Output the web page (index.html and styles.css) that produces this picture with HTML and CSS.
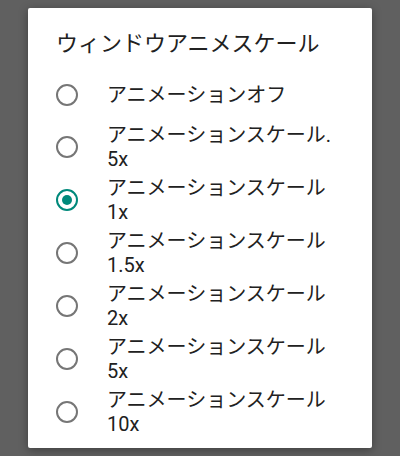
FILE: index.html
```html
<!DOCTYPE html>
<html lang="ja">
<head>
<meta charset="utf-8">
<link rel="stylesheet" href="styles.css">
</head>
<body>
<div class="dialog">
  <div class="title">ウィンドウアニメスケール</div>
  <div class="list">
    <div class="item first"><span class="radio"></span><span class="label">アニメーションオフ</span></div>
    <div class="item"><span class="radio"></span><span class="label">アニメーションスケール.<br>5x</span></div>
    <div class="item"><span class="radio checked"></span><span class="label">アニメーションスケール<br>1x</span></div>
    <div class="item"><span class="radio"></span><span class="label">アニメーションスケール<br>1.5x</span></div>
    <div class="item"><span class="radio"></span><span class="label">アニメーションスケール<br>2x</span></div>
    <div class="item"><span class="radio"></span><span class="label">アニメーションスケール<br>5x</span></div>
    <div class="item"><span class="radio"></span><span class="label">アニメーションスケール<br>10x</span></div>
  </div>
</div>
</body>
</html>
```
FILE: styles.css
```css
* { box-sizing: border-box; }
html, body { margin: 0; padding: 0; }
body {
  background: #606060;
  width: 400px;
  height: 456px;
  overflow: hidden;
  font-family: Roboto, "Noto Sans CJK JP", sans-serif;
  color: #212121;
}
.dialog {
  margin: 8px 0 0 28px;
  width: 344px;
  height: 440px;
  background: #ffffff;
  border-radius: 2px;
  box-shadow: 0 2px 10px rgba(0,0,0,0.35);
  padding: 24px 24px 0 28px;
  overflow: hidden;
}
.title {
  font-size: 22px;
  line-height: 24px;
  white-space: nowrap;
}
.list {
  margin-top: 13.5px;
  display: flex;
  flex-direction: column;
}
.item {
  display: flex;
  align-items: center;
  min-height: 53px;
  padding: 2px 0;
}
.item.first { min-height: 51px; }
.radio {
  flex: none;
  width: 22px;
  height: 22px;
  border: 2px solid #767676;
  border-radius: 50%;
  margin-right: 29px;
  position: relative;
}
.radio.checked { border-color: #00897b; }
.radio.checked::after {
  content: "";
  position: absolute;
  left: 4px;
  top: 4px;
  width: 10px;
  height: 10px;
  border-radius: 50%;
  background: #00897b;
}
.label {
  font-size: 20px;
  line-height: 24.5px;
  white-space: nowrap;
}
```
